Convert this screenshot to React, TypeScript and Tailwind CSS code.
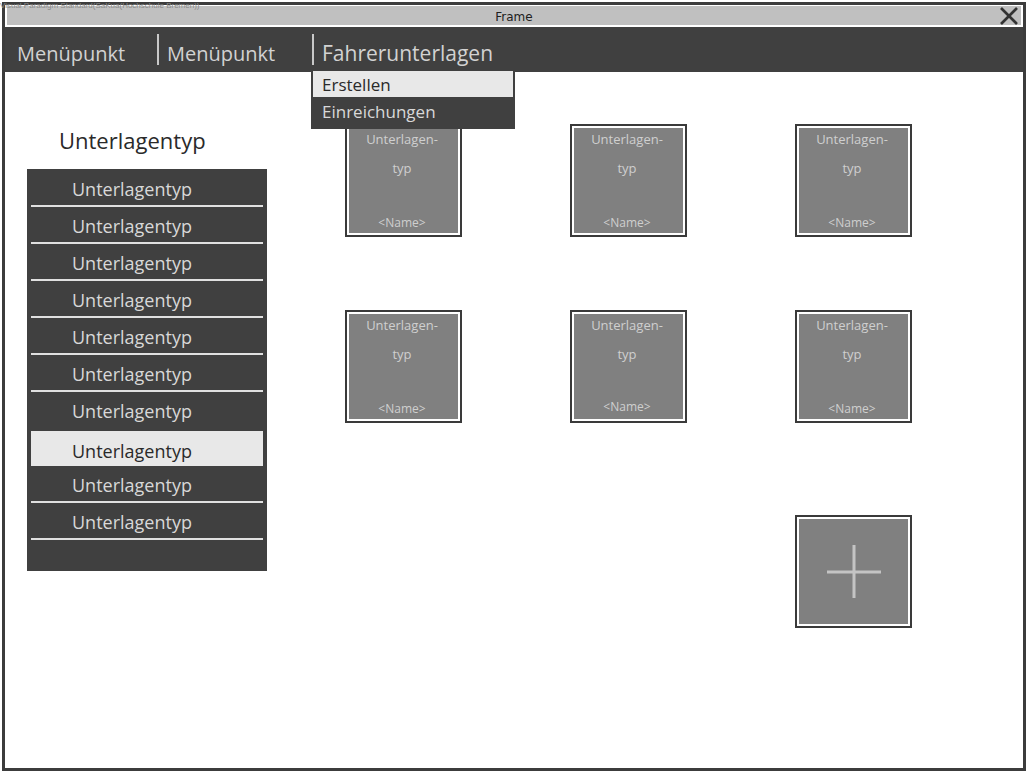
import React from "react";

const font = { fontFamily: '"Open Sans", "Liberation Sans", sans-serif' };

function Tile({ nameOffset = 0 }: { nameOffset?: number }) {
  return (
    <div className="w-[117px] h-[113px] border-2 border-[#3a3a3a] bg-white p-[2px]">
      <div className="relative w-full h-full bg-[#808080] text-[#cfcfcf] text-[13px] leading-none">
        <div className="absolute left-0 right-0 top-[5px] text-center pr-[3px]">Unterlagen-</div>
        <div className="absolute left-0 right-0 top-[34px] text-center pr-[3px]">typ</div>
        <div className="absolute left-0 right-0 text-center text-[12px] pr-[3px]" style={{ top: 89 + nameOffset }}>
          &lt;Name&gt;
        </div>
      </div>
    </div>
  );
}

function PlusTile() {
  return (
    <div className="w-[117px] h-[113px] border-2 border-[#3a3a3a] bg-white p-[2px]">
      <div className="w-full h-full bg-[#808080] flex items-center justify-center">
        <svg width="60" height="60" viewBox="0 0 60 60">
          <line x1="3" y1="30" x2="57" y2="30" stroke="#c4c4c4" strokeWidth="3" />
          <line x1="30" y1="3" x2="30" y2="56" stroke="#c4c4c4" strokeWidth="3" />
        </svg>
      </div>
    </div>
  );
}

export default function App() {
  const rows = Array.from({ length: 10 });
  return (
    <div className="w-[1030px] h-[774px] bg-white relative overflow-hidden" style={font}>
      <div
        className="absolute left-0 top-[2px] text-[8px] leading-none text-[#8a8a8a] z-10"
        style={{ fontFamily: '"Liberation Sans", sans-serif' }}
      >
        Visual Paradigm Standard(SaKua(Hochschule Bremen))
      </div>
      <div className="mt-[2px] ml-[2px] w-[1024px] h-[769px] border-[3px] border-[#3c3c3c] flex flex-col relative">
        {/* title */}
        <div className="h-[22px] px-[2px] pt-[1px] pb-[2px] bg-white">
          <div className="h-full bg-[#c0c0c0] relative flex items-center justify-center">
            <span
              className="text-[12px] text-[#202020] pt-[3px]"
              style={{ fontFamily: '"DejaVu Sans", sans-serif' }}
            >
              Frame
            </span>
            <svg className="absolute right-[2px] top-[1px]" width="20" height="18" viewBox="0 0 20 18">
              <line x1="2" y1="1" x2="18" y2="17" stroke="#333" strokeWidth="2.6" />
              <line x1="18" y1="1" x2="2" y2="17" stroke="#333" strokeWidth="2.6" />
            </svg>
          </div>
        </div>
        {/* menu bar */}
        <div className="h-[45px] bg-[#404040] flex items-center text-[20px] text-[#d2d2d2]">
          <span className="ml-[12px] w-[140px] pt-[8px]">Menüpunkt</span>
          <span className="w-[2px] h-[31px] bg-[#c8c8c8]" />
          <span className="ml-[8px] w-[145px] pt-[8px]">Menüpunkt</span>
          <span className="w-[2px] h-[31px] bg-[#c8c8c8]" />
          <span className="ml-[8px] pt-[8px] text-[21px]">Fahrerunterlagen</span>
        </div>
        {/* content */}
        <div className="flex-1 flex">
          <div className="pl-[22px] w-[262px]">
            <div className="ml-[32px] mt-[57px] text-[22px] text-[#2a2a2a] leading-none">Unterlagentyp</div>
            <div className="mt-[18px] w-[240px] h-[402px] bg-[#404040] pt-[1px]">
              {rows.map((_, i) => {
                if (i === 7) {
                  return (
                    <div
                      key={i}
                      className="mt-[2px] mx-[4px] h-[35px] bg-[#e8e8e8] text-[#2a2a2a] text-[18px] flex items-center pl-[41px] pt-[6px]"
                    >
                      Unterlagentyp
                    </div>
                  );
                }
                return (
                  <div
                    key={i}
                    className={`mx-[4px] h-[37px] border-b-2 ${i === 6 ? "border-transparent" : "border-[#e0e0e0]"} text-[#d8d8d8] text-[18px] flex items-center pl-[41px] pt-[4px]`}
                  >
                    Unterlagentyp
                  </div>
                );
              })}
            </div>
          </div>
          <div className="ml-[78px] mt-[52px]">
            <div className="grid grid-cols-[117px_117px_117px] gap-x-[108px] gap-y-[73px]">
              <Tile />
              <Tile />
              <Tile />
              <Tile />
              <Tile nameOffset={-2} />
              <Tile />
            </div>
            <div className="mt-[92px] flex justify-end">
              <PlusTile />
            </div>
          </div>
        </div>
        {/* dropdown */}
        <div className="absolute left-[306px] top-[64px] w-[204px] bg-[#404040] px-[2px] pt-[2px] pb-[2px] z-10">
          <div className="h-[26px] bg-[#e8e8e8] text-[#2a2a2a] text-[17px] flex items-center pl-[9px] pt-[2px]">
            Erstellen
          </div>
          <div className="h-[30px] text-[#d8d8d8] text-[17px] flex items-center pl-[9px]">Einreichungen</div>
        </div>
      </div>
    </div>
  );
}
